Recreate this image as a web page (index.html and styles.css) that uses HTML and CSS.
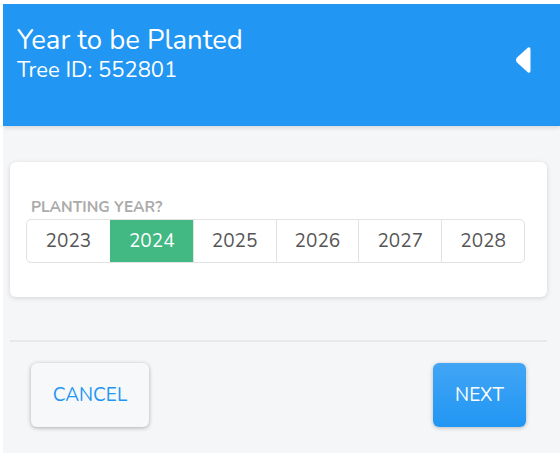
FILE: index.html
```html
<!DOCTYPE html>
<html>
<head>
<meta charset="utf-8">
<link rel="stylesheet" href="styles.css">
</head>
<body>
<div class="app">
  <header class="header">
    <div class="titles">
      <div class="title">Year to be Planted</div>
      <div class="subtitle">Tree ID: 552801</div>
    </div>
    <svg class="back" width="16" height="28" viewBox="0 0 16 28">
      <path d="M13 1.5 Q15.5 0.5 15.5 3.5 L15.5 24.5 Q15.5 27.5 13 26.5 L2 16.5 Q0 14 2 11.5 Z" fill="#fff"/>
    </svg>
  </header>
  <main class="content">
    <section class="card">
      <div class="label">PLANTING YEAR?</div>
      <div class="segments">
        <div class="seg">2023</div>
        <div class="seg active">2024</div>
        <div class="seg">2025</div>
        <div class="seg">2026</div>
        <div class="seg">2027</div>
        <div class="seg">2028</div>
      </div>
    </section>
    <hr class="divider">
    <div class="actions">
      <button class="btn cancel">CANCEL</button>
      <button class="btn next">NEXT</button>
    </div>
  </main>
</div>
</body>
</html>
```

FILE: styles.css
```css
html, body {
  margin: 0;
  padding: 0;
  background: #ffffff;
}
body {
  font-family: "Nunito", "Lato", "Open Sans", sans-serif;
}
.app {
  margin: 4px 0 0 3px;
  height: 449px;
  background: #f5f6f8;
  overflow: hidden;
}
.header {
  height: 122px;
  background: #2196f3;
  display: flex;
  justify-content: space-between;
  align-items: flex-start;
  padding: 0 29px 0 14px;
  box-shadow: 0 2px 4px rgba(0,0,0,0.12);
  color: #fff;
  position: relative;
}
.titles {
  padding-top: 20px;
}
.title {
  font-size: 27.5px;
  line-height: 33px;
}
.subtitle {
  font-size: 22px;
  line-height: 25px;
  margin-top: 1px;
}
.back {
  margin-top: 42px;
}
.content {
  width: 537px;
  margin-left: 7px;
  padding-top: 36px;
}
.card {
  background: #fff;
  border-radius: 6px;
  box-shadow: 0 1px 5px rgba(0,0,0,0.14);
  padding: 35px 22px 34px 16px;
}
.label {
  font-size: 15.5px;
  line-height: 20px;
  font-weight: 700;
  color: #ababab;
  margin-left: 5px;
  margin-bottom: 2px;
}
.segments {
  display: grid;
  grid-template-columns: repeat(6, 1fr);
  border: 1px solid #e2e2e2;
  border-radius: 5px;
  overflow: hidden;
  height: 42px;
}
.seg {
  display: flex;
  align-items: center;
  justify-content: center;
  font-size: 19px;
  color: #555;
  border-left: 1px solid #e2e2e2;
}
.seg:first-child {
  border-left: none;
}
.seg.active {
  background: #42b883;
  color: #fff;
  border-left-color: #42b883;
}
.divider {
  margin: 43px 0 0 0;
  border: none;
  border-top: 2px solid #e6e8eb;
  height: 0;
}
.actions {
  display: flex;
  justify-content: space-between;
  padding: 21px 21px 0 21px;
}
.btn {
  font-family: inherit;
  font-size: 19px;
  height: 64px;
  border: none;
  border-radius: 6px;
  cursor: pointer;
}
.cancel {
  width: 118px;
  background: #f7f8fa;
  color: #2196f3;
  box-shadow: 0 1px 4px rgba(0,0,0,0.3);
}
.next {
  width: 93px;
  background: linear-gradient(#42a5f5, #2196f3);
  color: #fff;
  box-shadow: 0 1px 4px rgba(0,0,0,0.25);
}
```
